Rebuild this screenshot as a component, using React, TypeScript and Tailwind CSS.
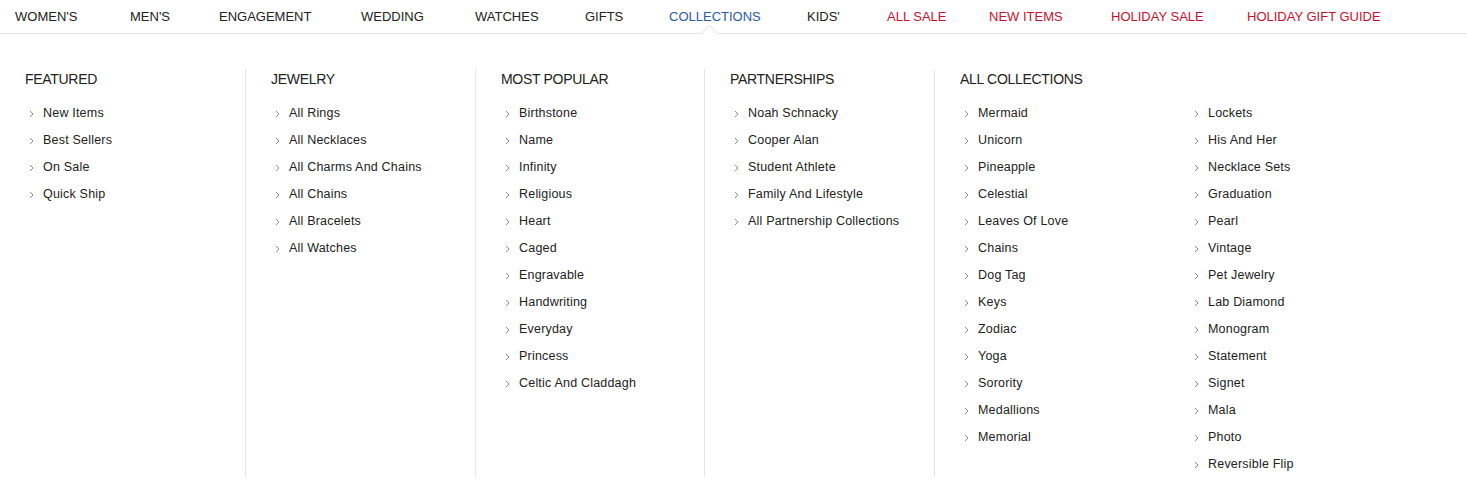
import React from "react";

// widths measure start-to-start so labels land where the reference puts them
const navItems = [
  { label: "WOMEN'S", tone: "default", w: "w-[115px]" },
  { label: "MEN'S", tone: "default", w: "w-[89px]" },
  { label: "ENGAGEMENT", tone: "default", w: "w-[142px]" },
  { label: "WEDDING", tone: "default", w: "w-[114px]" },
  { label: "WATCHES", tone: "default", w: "w-[110px]" },
  { label: "GIFTS", tone: "default", w: "w-[84px]" },
  { label: "COLLECTIONS", tone: "active", w: "w-[138px]" },
  { label: "KIDS'", tone: "default", w: "w-[80px]" },
  { label: "ALL SALE", tone: "sale", w: "w-[102px]" },
  { label: "NEW ITEMS", tone: "sale", w: "w-[122px]" },
  { label: "HOLIDAY SALE", tone: "sale", w: "w-[136px]" },
  { label: "HOLIDAY GIFT GUIDE", tone: "sale", w: "w-[140px]" },
];

const columns = [
  { title: "FEATURED", w: "w-[245px] pl-[25px]", items: ["New Items", "Best Sellers", "On Sale", "Quick Ship"] },
  {
    title: "JEWELRY",
    w: "w-[230px] pl-[25px] border-l border-[#e6e6e6]",
    items: ["All Rings", "All Necklaces", "All Charms And Chains", "All Chains", "All Bracelets", "All Watches"],
  },
  {
    title: "MOST POPULAR",
    w: "w-[229px] pl-[25px] border-l border-[#e6e6e6]",
    items: [
      "Birthstone",
      "Name",
      "Infinity",
      "Religious",
      "Heart",
      "Caged",
      "Engravable",
      "Handwriting",
      "Everyday",
      "Princess",
      "Celtic And Claddagh",
    ],
  },
  {
    title: "PARTNERSHIPS",
    w: "w-[230px] pl-[25px] border-l border-[#e6e6e6]",
    items: ["Noah Schnacky", "Cooper Alan", "Student Athlete", "Family And Lifestyle", "All Partnership Collections"],
  },
];

const allCollections = [
  ["Mermaid", "Unicorn", "Pineapple", "Celestial", "Leaves Of Love", "Chains", "Dog Tag", "Keys", "Zodiac", "Yoga", "Sorority", "Medallions", "Memorial"],
  ["Lockets", "His And Her", "Necklace Sets", "Graduation", "Pearl", "Vintage", "Pet Jewelry", "Lab Diamond", "Monogram", "Statement", "Signet", "Mala", "Photo", "Reversible Flip"],
];

const Chevron = () => (
  <svg width="5" height="8" viewBox="0 0 5 8" className="shrink-0">
    <polyline points="1,1 4,4 1,7" fill="none" stroke="#8a8a8a" strokeWidth="1" />
  </svg>
);

const LinkItem = ({ label }: { label: string }) => (
  <li className="h-[27px] flex items-center gap-[9px] pl-[4px] pt-[2px]">
    <Chevron />
    <a className="text-[12.5px] tracking-[0.2px] text-[#222] whitespace-nowrap cursor-pointer">{label}</a>
  </li>
);

const Heading = ({ title }: { title: string }) => (
  <h3 className="h-[19px] leading-[21px] mb-[11px] text-[14px] tracking-[-0.3px] text-[#222] whitespace-nowrap">{title}</h3>
);

export default function App() {
  return (
    <div className="w-[1467px] h-[494px] bg-white overflow-hidden" style={{ fontFamily: "'Liberation Sans', Arial, sans-serif" }}>
      {/* Top nav */}
      <nav className="h-[34px] border-b border-[#e6e6e6] pl-[15px] flex items-center">
        {navItems.map((item) => (
          <div key={item.label} className={"relative h-full flex items-center shrink-0 " + item.w}>
            <span
              className={
                "text-[13px] whitespace-nowrap " +
                (item.tone === "active" ? "text-[#2c5aa8]" : item.tone === "sale" ? "text-[#c8102e]" : "text-[#222]")
              }
            >
              {item.label}
            </span>
            {item.tone === "active" && (
              <span className="absolute left-[35px] -bottom-[5px] w-[11px] h-[11px] bg-white border-l border-t border-[#e6e6e6] rotate-45" />
            )}
          </div>
        ))}
      </nav>

      {/* Mega menu */}
      <div className="flex pt-[35px]">
        {columns.map((col) => (
          <div key={col.title} className={col.w}>
            <Heading title={col.title} />
            <ul>
              {col.items.map((it) => (
                <LinkItem key={it} label={it} />
              ))}
            </ul>
          </div>
        ))}
        <div className="pl-[25px] border-l border-[#e6e6e6]">
          <Heading title="ALL COLLECTIONS" />
          <div className="flex">
            {allCollections.map((list, i) => (
              <ul key={i} className="w-[230px]">
                {list.map((it) => (
                  <LinkItem key={it} label={it} />
                ))}
              </ul>
            ))}
          </div>
        </div>
      </div>
    </div>
  );
}
